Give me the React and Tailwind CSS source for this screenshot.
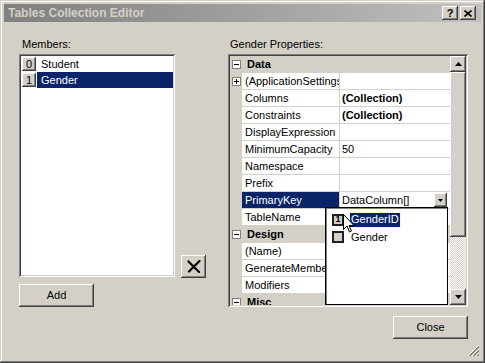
import React from 'react';

const raised = 'shadow-[inset_-1px_-1px_#404040,inset_1px_1px_#ffffff,inset_-2px_-2px_#808080,inset_2px_2px_#d4d0c8]';
const sunken = 'shadow-[inset_1px_1px_#808080,inset_-1px_-1px_#ffffff,inset_2px_2px_#404040,inset_-2px_-2px_#d4d0c8]';

const Box = ({ plus }) => (
  <div className="w-[9px] h-[9px] border border-[#808080] bg-white relative">
    <div className="absolute left-[1px] top-[3px] w-[5px] h-[1px] bg-black" />
    {plus && <div className="absolute left-[3px] top-[1px] w-[1px] h-[5px] bg-black" />}
  </div>
);

const Category = ({ label }) => (
  <div className="h-[17px] flex items-center bg-[#d4d0c8]">
    <div className="w-[12px] flex justify-center pl-[1px]"><Box /></div>
    <span className="font-bold text-[11px] pl-[5px] leading-none">{label}</span>
  </div>
);

const Row = ({ name, value, bold, selected, expand, dropdown }) => (
  <div className="h-[17px] flex">
    <div className="w-[12px] bg-[#d4d0c8] flex items-center justify-center pl-[1px]">
      {expand && <Box plus />}
    </div>
    <div className={`w-[97px] border-b border-[#d4d0c8] flex items-center pl-[3px] overflow-hidden whitespace-nowrap ${selected ? 'bg-[#0a246a] text-white' : 'bg-white'}`}>
      {name}
    </div>
    <div className="w-[1px] bg-[#d4d0c8]" />
    <div className={`flex-1 bg-white border-b border-[#d4d0c8] flex items-center pl-[2px] whitespace-nowrap ${bold ? 'font-bold' : ''}`}>
      <span className="flex-1">{value}</span>
      {dropdown && (
        <div className={`w-[13px] h-[14px] mr-[3px] bg-[#d4d0c8] ${raised} flex items-center justify-center`}>
          <svg width="5" height="3" viewBox="0 0 5 3"><path d="M0 0h5L2.5 3z" fill="#000" /></svg>
        </div>
      )}
    </div>
  </div>
);

const Arrow = ({ up }) => (
  <div className={`w-[16px] h-[16px] bg-[#d4d0c8] ${raised} flex items-center justify-center`}>
    <svg width="7" height="4" viewBox="0 0 7 4">
      <path d={up ? 'M3.5 0L7 4H0z' : 'M0 0h7L3.5 4z'} fill="#000" />
    </svg>
  </div>
);

const Check = ({ children }) => (
  <div className="w-[12px] h-[12px] border-2 border-[#202020] bg-[#d4d0c8] flex items-center justify-center text-[9px] font-bold leading-none">
    {children}
  </div>
);

export default function App() {
  return (
    <div className={`w-[485px] h-[363px] bg-[#d4d0c8] relative p-[4px] flex flex-col text-[11px] text-black font-['Liberation_Sans',Arial,sans-serif] shadow-[inset_-1px_-1px_#404040,inset_1px_1px_#d4d0c8,inset_-2px_-2px_#808080,inset_2px_2px_#ffffff]`}>
      {/* title bar */}
      <div className="h-[18px] flex items-center bg-gradient-to-r from-[#808080] to-[#c0c0c0] pl-[4px] pr-[5px]">
        <span className="flex-1 font-bold text-[12px] text-[#d4d0c8] leading-none">Tables Collection Editor</span>
        <div className={`w-[16px] h-[14px] bg-[#d4d0c8] ${raised} flex items-center justify-center font-bold text-[11px] leading-none`}>?</div>
        <div className={`ml-[2px] w-[16px] h-[14px] bg-[#d4d0c8] ${raised} flex items-center justify-center`}>
          <svg width="8" height="7" viewBox="0 0 8 7"><path d="M0.5 0.5l7 6M7.5 0.5l-7 6" stroke="#000" strokeWidth="1.6" /></svg>
        </div>
      </div>

      {/* body */}
      <div className="flex-1 relative flex pl-[15px]">
        {/* members column */}
        <div className="w-[187px] pt-[16px] flex flex-col">
          <div className="h-[13px] leading-[13px] pl-[3px] mb-[3px]">Members:</div>
          <div className="flex items-end gap-[6px]">
            <div className={`w-[156px] h-[223px] bg-white p-[2px] ${sunken}`}>
              <div className="h-[16px] flex items-center">
                <div className={`w-[14px] h-[14px] ml-[1px] bg-[#d4d0c8] ${raised} flex items-center justify-center leading-none`}>0</div>
                <span className="pl-[5px]">Student</span>
              </div>
              <div className="h-[16px] flex items-center">
                <div className={`w-[14px] h-[14px] ml-[1px] bg-[#d4d0c8] ${raised} flex items-center justify-center leading-none`}>1</div>
                <span className="flex-1 h-full bg-[#0a246a] text-white pl-[4px] ml-[1px] flex items-center">Gender</span>
              </div>
            </div>
            <div className={`w-[25px] h-[23px] mb-[-1px] bg-[#d4d0c8] ${raised} flex items-center justify-center`}>
              <svg width="14" height="13" viewBox="0 0 14 13">
                <path d="M1.5 1.5L12 12M12.5 1L2 11.5" stroke="#000" strokeWidth="2.2" strokeLinecap="round" />
              </svg>
            </div>
          </div>
          <div className={`mt-[7px] w-[75px] h-[23px] bg-[#d4d0c8] ${raised} flex items-center justify-center`}>Add</div>
        </div>

        {/* properties column */}
        <div className="ml-[22px] w-[240px] pt-[16px] flex flex-col">
          <div className="h-[13px] leading-[13px] pl-[2px] mb-[3px]">Gender Properties:</div>
          <div className={`w-[240px] h-[253px] p-[2px] bg-[#d4d0c8] relative flex ${sunken}`}>
            <div className="w-[220px] overflow-hidden">
              <Category label="Data" />
              <Row name="(ApplicationSettings)" value="" expand />
              <Row name="Columns" value="(Collection)" bold />
              <Row name="Constraints" value="(Collection)" bold />
              <Row name="DisplayExpression" value="" />
              <Row name="MinimumCapacity" value="50" />
              <Row name="Namespace" value="" />
              <Row name="Prefix" value="" />
              <Row name="PrimaryKey" value="DataColumn[]" selected dropdown />
              <Row name="TableName" value="" />
              <Category label="Design" />
              <Row name="(Name)" value="" />
              <Row name="GenerateMember" value="" />
              <Row name="Modifiers" value="" />
              <Category label="Misc" />
            </div>
            <div className="w-[16px] flex flex-col">
              <Arrow up />
              <div className={`h-[165px] bg-[#d4d0c8] ${raised}`} />
              <div className="h-[52px] bg-[repeating-conic-gradient(#ffffff_0_25%,#d4d0c8_0_50%)] bg-[length:2px_2px]" />
              <Arrow />
            </div>

            {/* dropdown popup */}
            <div className="absolute left-[97px] top-[153px] w-[123px] h-[98px] bg-white border border-black shadow-[inset_1px_1px_#808080] pl-[6px] pt-[4px]">
              <div className="h-[15px] flex items-center">
                <Check>1</Check>
                <span className="ml-[6px] px-[1px] h-[14px] flex items-center bg-[#0a246a] text-white outline outline-1 outline-dotted outline-[#ffe9a0]">GenderID</span>
              </div>
              <div className="h-[16px] flex items-center mt-[2px]">
                <Check />
                <span className="ml-[7px]">Gender</span>
              </div>
            </div>
          </div>
          <div className="flex justify-end mt-[9px]">
            <div className={`w-[75px] h-[23px] bg-[#d4d0c8] ${raised} flex items-center justify-center`}>Close</div>
          </div>
        </div>

        {/* mouse cursor */}
        <svg className="absolute left-[339px] top-[192px]" width="12" height="19" viewBox="0 0 12 19">
          <path d="M0.5 0.5v15l3.5-3.5 2.5 6 2-1-2.5-5.5h5z" fill="#fff" stroke="#000" strokeWidth="1" strokeLinejoin="miter" />
        </svg>

        {/* resize grip */}
        <svg className="absolute right-[1px] bottom-[2px]" width="13" height="13" viewBox="0 0 13 13">
          <path d="M12 1L1 12M12 5L5 12M12 9L9 12" stroke="#ffffff" strokeWidth="1" />
          <path d="M12 2L2 12M12 3L3 12M12 6L6 12M12 7L7 12M12 10L10 12M12 11L11 12" stroke="#808080" strokeWidth="1" />
        </svg>
      </div>
    </div>
  );
}
